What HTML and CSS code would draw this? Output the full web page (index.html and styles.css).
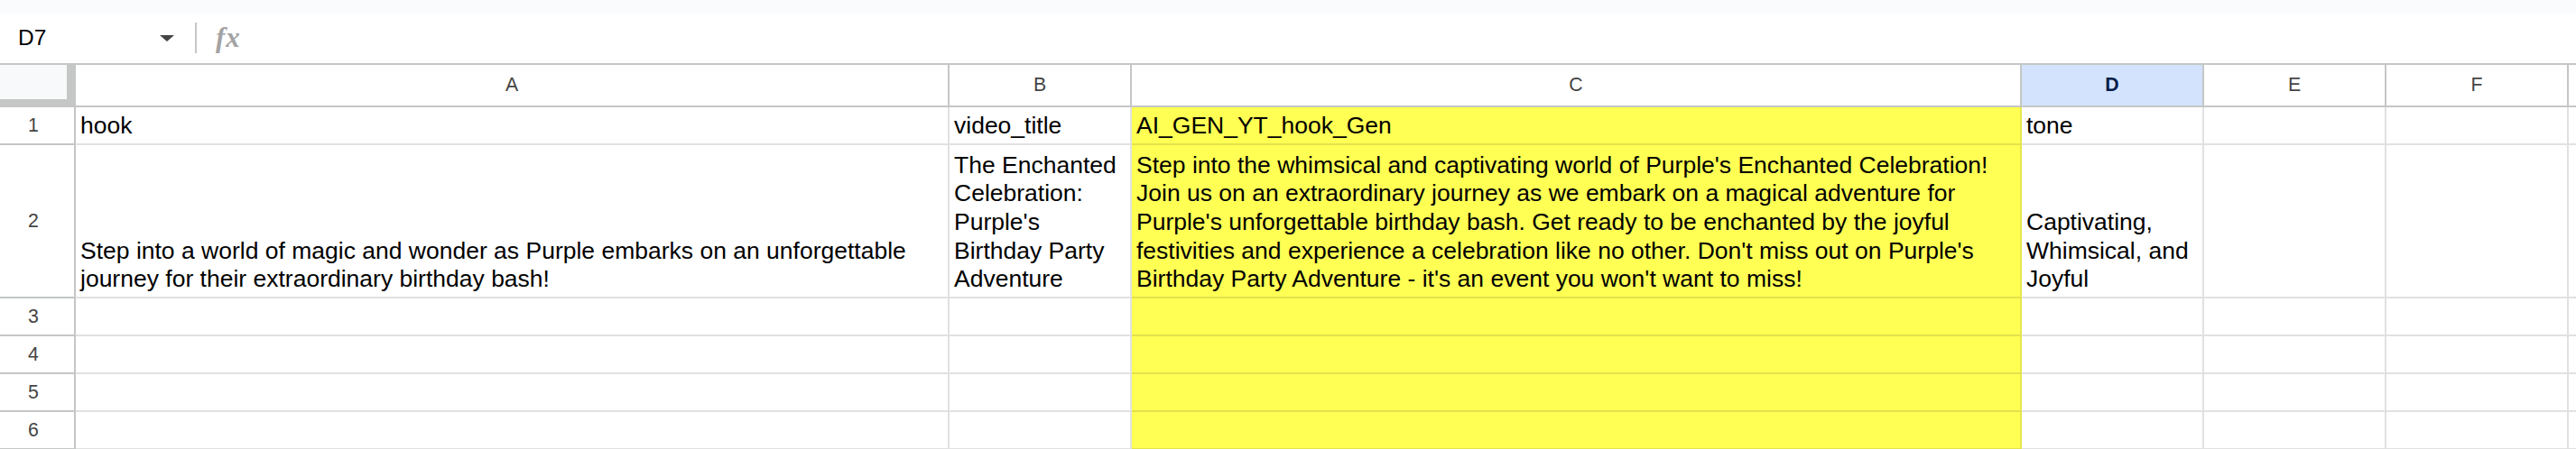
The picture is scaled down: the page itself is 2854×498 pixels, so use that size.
FILE: index.html
```html
<!DOCTYPE html>
<html lang="en">
<head>
  <meta charset="UTF-8" />
  <meta name="viewport" content="width=device-width, initial-scale=1.0" />
  <title>Sheet</title>
  <link rel="stylesheet" href="styles.css">
</head>
<body>
  <div class="topbar"></div>

  <div class="formula-bar">
    <div class="name-box">
      <span class="cell-ref">D7</span>
      <span class="caret"></span>
    </div>
    <div class="divider"></div>
    <span class="fx">fx</span>
  </div>

  <div class="sheet">
    <!-- column headers -->
    <div class="corner"></div>
    <div class="col-head">A</div>
    <div class="col-head">B</div>
    <div class="col-head">C</div>
    <div class="col-head active">D</div>
    <div class="col-head">E</div>
    <div class="col-head">F</div>
    <div class="col-head edge"></div>

    <!-- row 1 -->
    <div class="row-head">1</div>
    <div class="cell">hook</div>
    <div class="cell">video_title</div>
    <div class="cell hl">AI_GEN_YT_hook_Gen</div>
    <div class="cell">tone</div>
    <div class="cell"></div>
    <div class="cell"></div>
    <div class="cell edge"></div>

    <!-- row 2 -->
    <div class="row-head">2</div>
    <div class="cell">Step into a world of magic and wonder as Purple embarks on an unforgettable journey for their extraordinary birthday bash!</div>
    <div class="cell">The Enchanted Celebration: Purple's Birthday Party Adventure</div>
    <div class="cell hl">Step into the whimsical and captivating world of Purple's Enchanted Celebration! Join us on an extraordinary journey as we embark on a magical adventure for Purple's unforgettable birthday bash. Get ready to be enchanted by the joyful festivities and experience a celebration like no other. Don't miss out on Purple's Birthday Party Adventure - it's an event you won't want to miss!</div>
    <div class="cell">Captivating, Whimsical, and Joyful</div>
    <div class="cell"></div>
    <div class="cell"></div>
    <div class="cell edge"></div>

    <!-- rows 3-6 -->
    <div class="row-head">3</div>
    <div class="cell"></div>
    <div class="cell"></div>
    <div class="cell hl"></div>
    <div class="cell"></div>
    <div class="cell"></div>
    <div class="cell"></div>
    <div class="cell edge"></div>

    <div class="row-head">4</div>
    <div class="cell"></div>
    <div class="cell"></div>
    <div class="cell hl"></div>
    <div class="cell"></div>
    <div class="cell"></div>
    <div class="cell"></div>
    <div class="cell edge"></div>

    <div class="row-head">5</div>
    <div class="cell"></div>
    <div class="cell"></div>
    <div class="cell hl"></div>
    <div class="cell"></div>
    <div class="cell"></div>
    <div class="cell"></div>
    <div class="cell edge"></div>

    <div class="row-head">6</div>
    <div class="cell"></div>
    <div class="cell"></div>
    <div class="cell hl"></div>
    <div class="cell"></div>
    <div class="cell"></div>
    <div class="cell"></div>
    <div class="cell edge"></div>
  </div>
</body>
</html>
```

FILE: styles.css
```css
html, body {
  margin: 0;
  padding: 0;
  overflow: hidden;
  background: #fff;
}
body {
  font-family: "Liberation Sans", Arial, sans-serif;
  color: #000;
}
.topbar {
  height: 14px;
  background: #f9fbfd;
}
.formula-bar {
  display: flex;
  align-items: center;
  height: 58px;
  box-sizing: border-box;
  border-bottom: 2px solid #c4c7c5;
}
.name-box {
  display: flex;
  align-items: center;
  width: 205px;
  box-sizing: border-box;
  padding: 0 12px 0 20px;
}
.cell-ref {
  font-size: 24.5px;
}
.caret {
  margin-left: auto;
  width: 0;
  height: 0;
  border-left: 8px solid transparent;
  border-right: 8px solid transparent;
  border-top: 7px solid #444;
}
.divider {
  width: 2px;
  height: 34px;
  margin-left: 11px;
  background: #c7c7c7;
}
.fx {
  margin-left: 21px;
  font-family: "Liberation Serif", "Times New Roman", serif;
  font-style: italic;
  font-weight: bold;
  font-size: 31px;
  letter-spacing: 1px;
  color: #a3a3a3;
}
.sheet {
  display: grid;
  grid-template-columns: 84px 968px 202px 986px 202px 202px 202px 1fr;
  grid-template-rows: 47px 42px 170px repeat(4, 42px);
}
.corner {
  background: #f8f9fa;
  border-right: 10px solid #c4c7c5;
  border-bottom: 9px solid #c4c7c5;
}
.col-head,
.row-head {
  display: flex;
  align-items: center;
  justify-content: center;
  box-sizing: border-box;
  border-right: 2px solid #c4c7c5;
  border-bottom: 2px solid #c4c7c5;
  font-size: 21.3px;
  color: #444;
}
.row-head {
  padding-right: 8px;
}
.col-head.active {
  background: #d3e3fd;
  color: #041e49;
  font-weight: bold;
}
.cell {
  display: flex;
  flex-direction: column;
  justify-content: flex-end;
  box-sizing: border-box;
  overflow: hidden;
  padding: 5px 5px 3px;
  border-right: 2px solid #e1e1e1;
  border-bottom: 2px solid #e1e1e1;
  font-size: 26.5px;
  line-height: 31.67px;
}
.cell.hl {
  background: #ffff54;
  border-right-color: #e6e64e;
  border-bottom-color: #e2e24c;
}
.edge {
  border-right: 0;
}
```
